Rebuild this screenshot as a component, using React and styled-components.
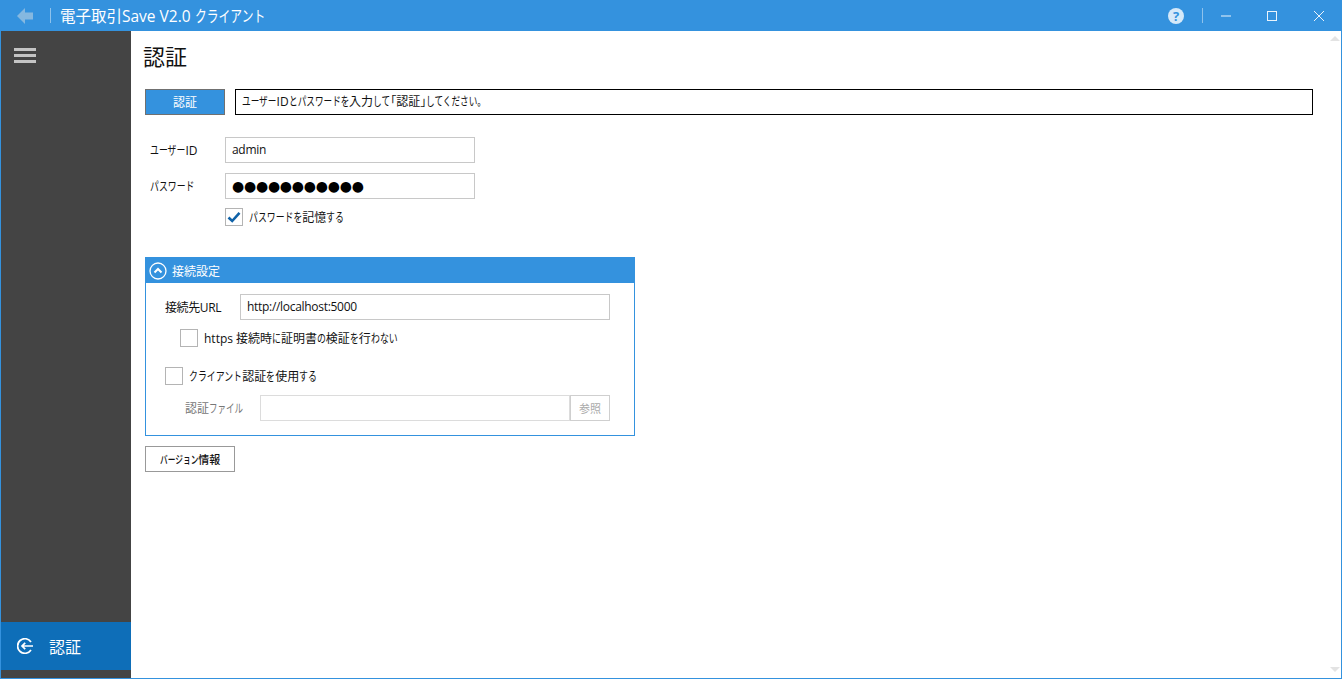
import React from "react";
import styled, { createGlobalStyle } from "styled-components";

const FONT = `"Open Sans", "Noto Sans CJK JP", sans-serif`;
const BLUE = "#3492de";

const GlobalStyle = createGlobalStyle`
  html, body {
    margin: 0;
    padding: 0;
    height: 100%;
    overflow: hidden;
    background: #fff;
  }
  #root {
    height: 100%;
  }
  * {
    box-sizing: border-box;
    font-feature-settings: "palt";
  }
`;

const Window = styled.div`
  width: 1342px;
  height: 679px;
  display: flex;
  flex-direction: column;
  border: 1px solid ${BLUE};
  border-top: none;
  font-family: ${FONT};
  color: #111;
  font-size: 12px;
`;

const KanaBox = styled.span`
  display: inline-block;
  white-space: nowrap;
  width: ${(p) => p.$w}em;
`;

const KanaGlyphs = styled.span`
  display: inline-block;
  font-feature-settings: normal;
  transform-origin: left center;
  transform: scaleX(${(p) => p.$k});
`;

// the original UI font has much narrower kana than Noto, so squeeze them
const Kana = ({ children, k = 0.74 }) => (
  <KanaBox $w={children.length * k}>
    <KanaGlyphs $k={k}>{children}</KanaGlyphs>
  </KanaBox>
);

const TitleBar = styled.header`
  height: 31px;
  flex: none;
  display: flex;
  align-items: center;
  background: ${BLUE};
  color: #fff;
  margin: 0 -1px;
`;

const BackButton = styled.div`
  width: 50px;
  height: 31px;
  display: flex;
  align-items: center;
  padding-left: 17px;
`;

const Divider = styled.span`
  width: 1px;
  height: 15px;
  background: #8ec2ec;
`;

const Title = styled.h1`
  margin: 0 0 0 9px;
  font-size: 15.5px;
  font-weight: 400;
  white-space: nowrap;
  flex: 1;
`;

const WinControls = styled.div`
  display: flex;
  align-items: center;
  height: 31px;
`;

const HelpIcon = styled.div`
  width: 16px;
  height: 16px;
  border-radius: 50%;
  background: #d5e9f9;
  color: #3492de;
  font-size: 13px;
  font-weight: 700;
  line-height: 16px;
  text-align: center;
  margin-right: 18px;
`;

const WinButton = styled.div`
  width: 46px;
  height: 31px;
  display: flex;
  align-items: center;
  justify-content: center;
  margin-right: ${(p) => p.$mr ?? 0}px;
`;

const Body = styled.div`
  flex: 1;
  min-height: 0;
  display: flex;
`;

const Sidebar = styled.nav`
  width: 130px;
  flex: none;
  background: #444444;
  display: flex;
  flex-direction: column;
  justify-content: space-between;
  padding-bottom: 8px;
`;

const Hamburger = styled.div`
  display: flex;
  flex-direction: column;
  gap: 3px;
  padding: 17px 0 0 13px;

  span {
    display: block;
    width: 22px;
    height: 3px;
    background: #c4c4c4;
  }
`;

const NavItem = styled.div`
  height: 48px;
  display: flex;
  align-items: center;
  gap: 16px;
  padding-left: 16px;
  background: #0e6eb8;
  color: #fff;
  font-size: 16px;
`;

const Main = styled.main`
  flex: 1;
  position: relative;
  padding: 11px 0 0 14px;
`;

const Heading = styled.h2`
  margin: 0 0 19px -2px;
  font-size: 22px;
  line-height: 28px;
  font-weight: 400;
  color: #111;
`;

const AuthRow = styled.div`
  display: flex;
  gap: 10px;
  width: 1168px;
  margin-bottom: 22px;
`;

const PrimaryButton = styled.button`
  width: 80px;
  height: 26px;
  flex: none;
  padding: 0;
  background: ${BLUE};
  border: 1px solid #707070;
  color: #fff;
  font: 12px ${FONT};
`;

const Message = styled.div`
  flex: 1;
  height: 26px;
  border: 1px solid #000;
  line-height: 24px;
  padding-left: 6px;
  font-size: 12px;
`;

const FormRow = styled.div`
  display: flex;
  align-items: center;
  height: 26px;
  margin-bottom: ${(p) => p.$mb ?? 10}px;
  padding-left: ${(p) => p.$pl ?? 0}px;
`;

const Label = styled.label`
  width: ${(p) => p.$w}px;
  flex: none;
  font-size: 12px;
  letter-spacing: ${(p) => p.$ls ?? 0}px;
  color: ${(p) => (p.$disabled ? "#777" : "#111")};
`;

const Input = styled.div`
  width: ${(p) => p.$w}px;
  height: 26px;
  flex: none;
  border: 1px solid ${(p) => (p.$disabled ? "#dcdcdc" : "#c8c8c8")};
  padding-left: 6px;
  line-height: 24px;
  font-size: 12px;
  letter-spacing: -0.3px;
`;

const Dots = styled.span`
  font-family: "DejaVu Sans", sans-serif;
  font-size: 14px;
  letter-spacing: -0.25px;
  color: #000;
  line-height: 24px;
`;

const CheckRow = styled.div`
  display: flex;
  align-items: center;
  gap: 6px;
  height: 18px;
  margin-bottom: ${(p) => p.$mb ?? 0}px;
  padding-left: ${(p) => p.$pl ?? 0}px;
  font-size: 12px;
`;

const CheckBox = styled.span`
  width: 18px;
  height: 18px;
  flex: none;
  border: 1px solid #b4b4b4;
  display: flex;
  align-items: center;
  justify-content: center;
`;

const CheckText = styled.span`
  white-space: nowrap;
`;

const Panel = styled.section`
  width: 490px;
  height: 179px;
  border: 1px solid ${BLUE};
  margin-top: 31px;
`;

const PanelHeader = styled.div`
  height: 25px;
  background: ${BLUE};
  display: flex;
  align-items: center;
  gap: 5px;
  padding-left: 3px;
  color: #fff;
  font-size: 12px;
`;

const PanelBody = styled.div`
  padding: 11px 0 0 19px;
`;

const BrowseButton = styled.button`
  width: 40px;
  height: 26px;
  flex: none;
  padding: 0;
  background: #fff;
  border: 1px solid #cfcfcf;
  color: #aaa;
  font: 11px ${FONT};
`;

const VersionButton = styled.button`
  display: block;
  width: 90px;
  height: 26px;
  margin-top: 10px;
  padding: 0;
  background: #fff;
  border: 1px solid #999;
  color: #111;
  font: 500 11px ${FONT};
`;

const ScrollUp = styled.span`
  position: absolute;
  top: 5px;
  right: 1px;
  width: 0;
  height: 0;
  border-left: 5px solid transparent;
  border-right: 5px solid transparent;
  border-bottom: 5px solid #e3e3e3;
`;

const ScrollDown = styled.span`
  position: absolute;
  bottom: 6px;
  right: 1px;
  width: 0;
  height: 0;
  border-left: 5px solid transparent;
  border-right: 5px solid transparent;
  border-top: 5px solid #e3e3e3;
`;

const Check = () => (
  <svg width="14" height="12" viewBox="0 0 14 12">
    <path d="M1.5 6.5 L5.2 10 L12.5 1.8" fill="none" stroke="#0f62a8" strokeWidth="2.6" />
  </svg>
);

const App = () => (
  <>
    <GlobalStyle />
    <Window>
      <TitleBar>
        <BackButton>
          <svg width="16" height="16" viewBox="0 0 16 16">
            <path d="M0 8 L8 0 V4.5 H16 V11.5 H8 V16 Z" fill="#85b8e0" />
          </svg>
        </BackButton>
        <Divider />
        <Title>
          電子取引Save V2.0 <Kana k={0.76}>クライアント</Kana>
        </Title>
        <WinControls>
          <HelpIcon>?</HelpIcon>
          <Divider />
          <WinButton>
            <svg width="10" height="2" viewBox="0 0 10 2">
              <path d="M0 1 H10" stroke="#eaf4fc" strokeWidth="1" />
            </svg>
          </WinButton>
          <WinButton $mr={1}>
            <svg width="10" height="10" viewBox="0 0 10 10">
              <rect x="0.5" y="0.5" width="9" height="9" fill="none" stroke="#eaf4fc" />
            </svg>
          </WinButton>
          <WinButton>
            <svg width="10" height="10" viewBox="0 0 10 10">
              <path d="M0 0 L10 10 M10 0 L0 10" stroke="#eaf4fc" strokeWidth="1" />
            </svg>
          </WinButton>
        </WinControls>
      </TitleBar>
      <Body>
        <Sidebar>
          <Hamburger>
            <span />
            <span />
            <span />
          </Hamburger>
          <NavItem>
            <svg width="16" height="16" viewBox="0 0 16 16">
              <path d="M14 4 A7.3 7.3 0 1 0 14 12" fill="none" stroke="#fff" strokeWidth="1.7" />
              <path d="M16 8 H5 M8.2 4.8 L5 8 L8.2 11.2" fill="none" stroke="#fff" strokeWidth="1.7" />
            </svg>
            認証
          </NavItem>
        </Sidebar>
        <Main>
          <Heading>認証</Heading>
          <AuthRow>
            <PrimaryButton>認証</PrimaryButton>
            <Message>
              <Kana k={0.72}>ユーザー</Kana>ID<Kana k={0.72}>とパスワードを</Kana>入力<Kana k={0.72}>して</Kana>「認証」<Kana k={0.72}>してください。</Kana>
            </Message>
          </AuthRow>
          <FormRow $pl={5}>
            <Label $w={75}>
              <Kana>ユーザー</Kana>ID
            </Label>
            <Input $w={250}>admin</Input>
          </FormRow>
          <FormRow $pl={5} $mb={9}>
            <Label $w={75}>
              <Kana>パスワード</Kana>
            </Label>
            <Input $w={250}>
              <Dots>●●●●●●●●●●●</Dots>
            </Input>
          </FormRow>
          <CheckRow $pl={80}>
            <CheckBox>
              <Check />
            </CheckBox>
            <CheckText>
              <Kana>パスワードを</Kana>記憶<Kana>する</Kana>
            </CheckText>
          </CheckRow>
          <Panel>
            <PanelHeader>
              <svg width="18" height="18" viewBox="0 0 18 18">
                <circle cx="9" cy="9" r="8" fill="none" stroke="#fff" strokeWidth="1.3" />
                <path d="M5.5 10.5 L9 7 L12.5 10.5" fill="none" stroke="#fff" strokeWidth="2" />
              </svg>
              接続設定
            </PanelHeader>
            <PanelBody>
              <FormRow $mb={9}>
                <Label $w={75} $ls={-0.4}>
                  接続先URL
                </Label>
                <Input $w={370}>http://localhost:5000</Input>
              </FormRow>
              <CheckRow $pl={15} $mb={20}>
                <CheckBox />
                <CheckText>
                  https 接続時<Kana>に</Kana>証明書<Kana>の</Kana>検証<Kana>を</Kana>行<Kana>わない</Kana>
                </CheckText>
              </CheckRow>
              <CheckRow $mb={10}>
                <CheckBox />
                <CheckText>
                  <Kana>クライアント</Kana>認証<Kana>を</Kana>使用<Kana>する</Kana>
                </CheckText>
              </CheckRow>
              <FormRow $pl={20} $mb={0}>
                <Label $w={75} $disabled>
                  認証<Kana k={0.71}>ファイル</Kana>
                </Label>
                <Input $w={310} $disabled />
                <BrowseButton>参照</BrowseButton>
              </FormRow>
            </PanelBody>
          </Panel>
          <VersionButton>
            <Kana k={0.7}>バージョン</Kana>情報
          </VersionButton>
          <ScrollUp />
          <ScrollDown />
        </Main>
      </Body>
    </Window>
  </>
);

export default App;
